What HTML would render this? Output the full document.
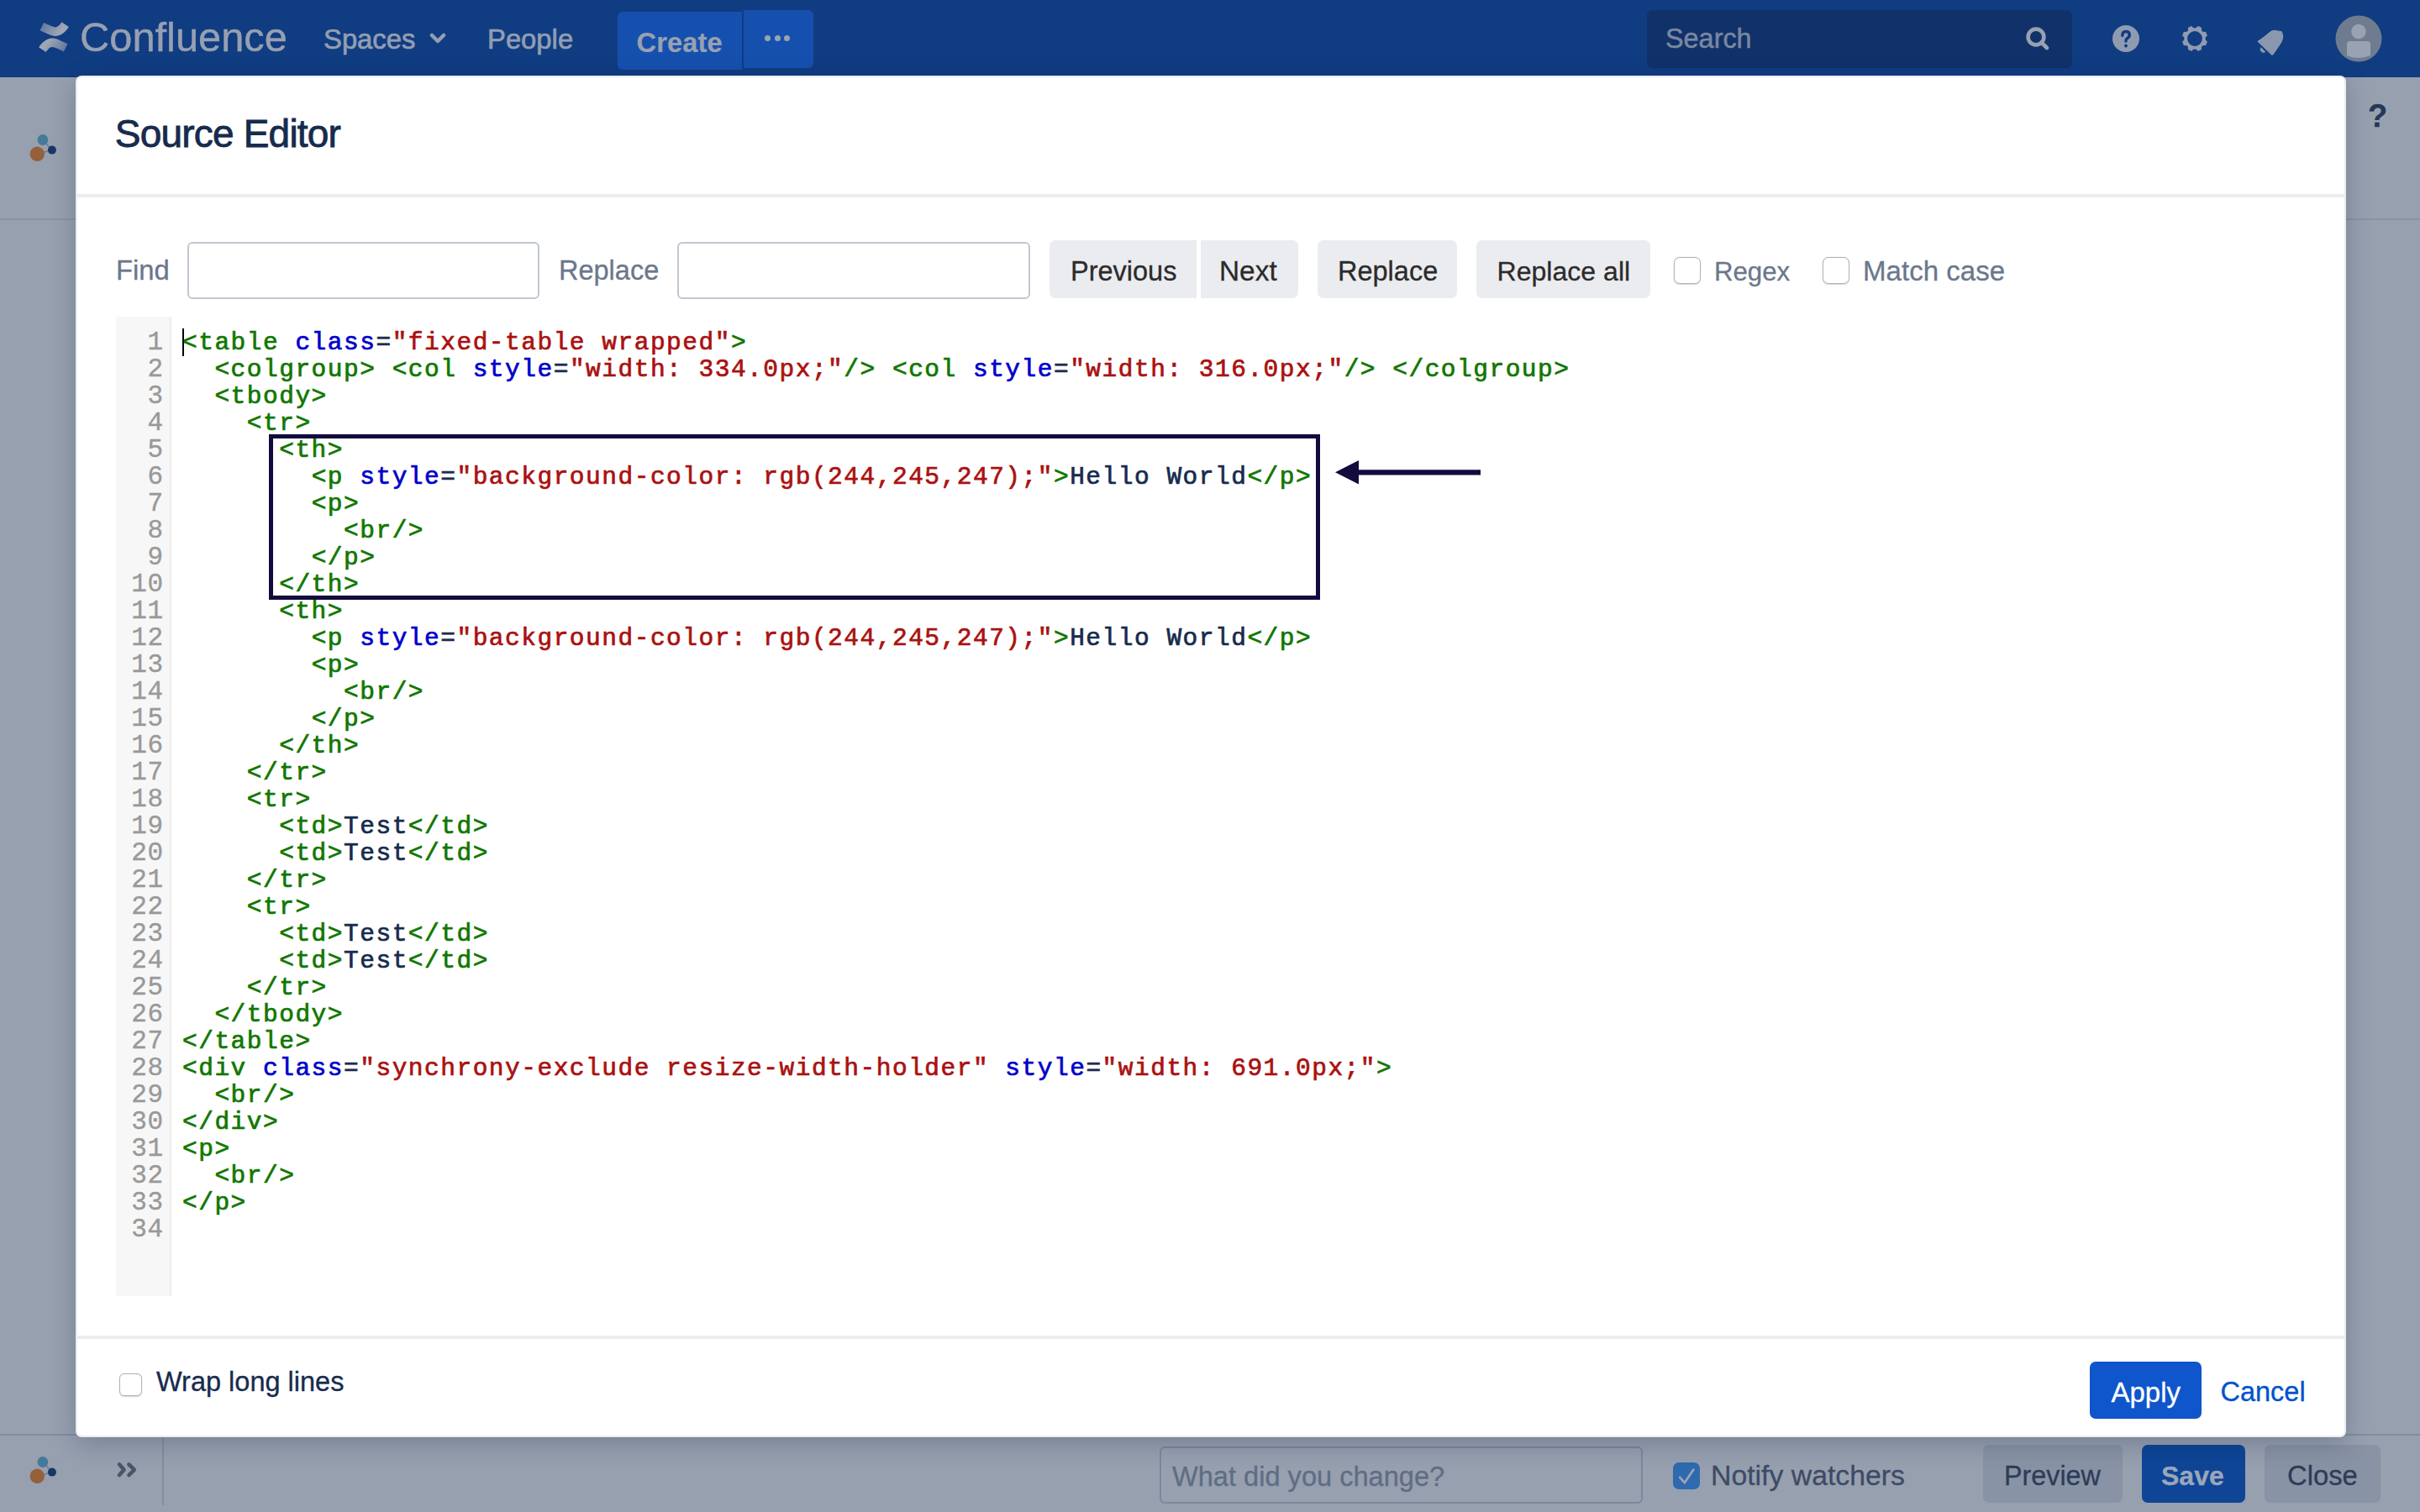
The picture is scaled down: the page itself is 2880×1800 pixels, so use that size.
<!DOCTYPE html>
<html><head><meta charset="utf-8"><title>Source Editor</title>
<style>
html,body{margin:0;padding:0;}
body{width:2880px;height:1800px;position:relative;overflow:hidden;background:#97a0af;font-family:"Liberation Sans", sans-serif;}
.b{position:absolute;}
.t{position:absolute;white-space:nowrap;line-height:1;font-family:"Liberation Sans", sans-serif;-webkit-text-stroke:0.3px;}
pre.code{position:absolute;margin:0;font-family:"Liberation Mono", monospace;font-size:32px;line-height:32px;}
@media (max-width:2000px){html{zoom:0.5;}}
</style></head><body>
<div class="b" style="left:0px;top:0px;width:2880px;height:92px;background:#103c82;"></div>
<svg class="b" style="left:40px;top:20px" width="50" height="48" viewBox="0 0 50 48">
<defs><linearGradient id="lg1" gradientUnits="userSpaceOnUse" x1="9" y1="9" x2="28" y2="22"><stop offset="0" stop-color="#5f759c"/><stop offset="1" stop-color="#9ea6b5"/></linearGradient>
<linearGradient id="lg2" gradientUnits="userSpaceOnUse" x1="39" y1="39" x2="20" y2="26"><stop offset="0" stop-color="#5f759c"/><stop offset="1" stop-color="#9ea6b5"/></linearGradient></defs>
<path d="M7.6 16.2 L20 21.8 Q26 24.2 32 21.5 Q38 18.5 41.9 12.1 L33.3 6.3 Q30 11.8 26.3 12.4 Q24 12.8 12.1 7 Z" fill="url(#lg1)"/>
<path d="M40.4 32.2 L28 26.6 Q22 24.2 16 26.9 Q10 29.9 6.1 36.3 L14.7 42.1 Q18 36.6 21.7 36 Q24 35.6 35.9 41.4 Z" fill="url(#lg2)"/>
</svg>
<div class="t" style="left:95px;top:19.7px;font-size:48.8px;color:#97a0b1;font-weight:400;-webkit-text-stroke:0.4px;">Confluence</div>
<div class="t" style="left:385px;top:30.7px;font-size:32.8px;color:#929eb2;font-weight:400;-webkit-text-stroke:0.7px;">Spaces</div>
<svg class="b" style="left:511px;top:39px" width="20" height="14" viewBox="0 0 20 14"><path d="M3 3 L10 10 L17 3" stroke="#929eb2" stroke-width="4.5" fill="none" stroke-linecap="round" stroke-linejoin="round"/></svg>
<div class="t" style="left:580px;top:30.7px;font-size:32.8px;color:#929eb2;font-weight:400;-webkit-text-stroke:0.7px;">People</div>
<div class="b" style="left:735px;top:14px;width:148px;height:69px;background:#1650ae;border-radius:6px 0 0 6px;"></div>
<div class="b" style="left:885px;top:12px;width:83px;height:69px;background:#1650ae;border-radius:0 6px 6px 0;"></div>
<div class="t" style="left:757.5px;top:34.9px;font-size:32.6px;color:#98a1b1;font-weight:700;-webkit-text-stroke:0.2px;letter-spacing:0.15px;">Create</div>
<div class="b" style="left:910.2px;top:42.4px;width:7px;height:7px;border-radius:50%;background:#9aa3b2"></div>
<div class="b" style="left:921.5px;top:42.4px;width:7px;height:7px;border-radius:50%;background:#9aa3b2"></div>
<div class="b" style="left:932.8px;top:42.4px;width:7px;height:7px;border-radius:50%;background:#9aa3b2"></div>
<div class="b" style="left:1960px;top:12px;width:506px;height:69px;background:#11316a;border-radius:7px;"></div>
<div class="t" style="left:1982px;top:30.2px;font-size:32.4px;color:#7a88a0;font-weight:400;-webkit-text-stroke:0.5px;">Search</div>
<svg class="b" style="left:2405px;top:26px" width="40" height="40" viewBox="0 0 40 40"><circle cx="18" cy="18" r="9.4" stroke="#98a1b1" stroke-width="4.6" fill="none"/><path d="M24.5 24.5 L31 31" stroke="#98a1b1" stroke-width="4.6" stroke-linecap="round"/></svg>
<svg class="b" style="left:2513px;top:29px" width="34" height="34" viewBox="0 0 34 34"><circle cx="17" cy="17" r="16" fill="#8f9bb0"/>
<path d="M12.8 13.2 Q12.8 8.4 17 8.4 Q21.2 8.4 21.2 12.6 Q21.2 15.5 18.3 16.8 Q17 17.5 17 20" stroke="#103c82" stroke-width="3.5" fill="none" stroke-linecap="round"/><circle cx="17" cy="25.6" r="2" fill="#103c82"/></svg>
<svg class="b" style="left:2595px;top:29px" width="34" height="34" viewBox="0 0 34 34"><defs><mask id="gm"><rect x="0" y="0" width="34" height="34" fill="white"/><circle cx="17" cy="17" r="8.9" fill="black"/><circle cx="17.00" cy="1.10" r="3.3" fill="black"/><circle cx="28.24" cy="5.76" r="3.3" fill="black"/><circle cx="32.90" cy="17.00" r="3.3" fill="black"/><circle cx="28.24" cy="28.24" r="3.3" fill="black"/><circle cx="17.00" cy="32.90" r="3.3" fill="black"/><circle cx="5.76" cy="28.24" r="3.3" fill="black"/><circle cx="1.10" cy="17.00" r="3.3" fill="black"/><circle cx="5.76" cy="5.76" r="3.3" fill="black"/></mask></defs>
<circle cx="17" cy="17" r="15.2" fill="#8f9bb0" mask="url(#gm)"/></svg>
<svg class="b" style="left:2675px;top:25px" width="55" height="50" viewBox="0 0 55 50">
<path d="M12.1 23.5 Q18 20 25.8 13.2 Q29 10.5 33.1 10.9 L37.5 11.8 Q40.5 11 41.3 14 Q43 18 41.8 21.5 Q41 25 38.5 28.2 L30.5 40 Q29.4 41.5 28 40.3 L12.6 25.5 Q11 24.3 12.1 23.5 Z" fill="#8b97ad"/>
<path d="M15.7 31.2 A4 4 0 0 0 21.3 36.8 Z" fill="#8b97ad"/></svg>
<svg class="b" style="left:2779px;top:18px" width="56" height="56" viewBox="0 0 56 56"><circle cx="28" cy="28" r="27.5" fill="#6f7c90"/>
<circle cx="28" cy="19.5" r="8.7" fill="#98a2b2"/><path d="M14 35 Q14 31 18 31 L38 31 Q42 31 42 35 L42 48 Q28 54 14 48 Z" fill="#98a2b2"/></svg>
<div class="b" style="left:0px;top:92px;width:2880px;height:1708px;background:#97a0af;"></div>
<div class="b" style="left:0px;top:260px;width:2880px;height:2px;background:#8a93a2;"></div>
<svg class="b" style="left:30px;top:150px" width="45" height="45" viewBox="0 0 45 45">
<path d="M20.9 16.5 L31.9 28.6 L14.3 33.3" stroke="#6b7686" stroke-width="1.3" fill="none"/>
<g style="filter:blur(0.5px)"><circle cx="20.9" cy="16.5" r="6.4" fill="#457999"/><circle cx="31.9" cy="28.6" r="5" fill="#173864"/><circle cx="14.3" cy="33.3" r="8.7" fill="#95603a"/></g></svg>
<div class="t" style="left:2818px;top:119.3px;font-size:38px;color:#253858;font-weight:700;">?</div>
<div class="b" style="left:0px;top:1707px;width:2880px;height:2px;background:#838c9b;"></div>
<div class="b" style="left:193px;top:1709px;width:2px;height:83px;background:#858e9d;"></div>
<svg class="b" style="left:30px;top:1724px" width="45" height="45" viewBox="0 0 45 45">
<path d="M20.9 16.5 L31.9 28.6 L14.3 33.3" stroke="#6b7686" stroke-width="1.3" fill="none"/>
<g style="filter:blur(0.5px)"><circle cx="20.9" cy="16.5" r="6.4" fill="#457999"/><circle cx="31.9" cy="28.6" r="5" fill="#173864"/><circle cx="14.3" cy="33.3" r="8.7" fill="#95603a"/></g></svg>
<svg class="b" style="left:136px;top:1737px" width="30" height="26" viewBox="0 0 30 26"><path d="M6 6.3 L11.6 12.7 L6 19.1 M17.4 6.3 L23.9 12.7 L17.4 19.1" stroke="#4b5567" stroke-width="4.5" fill="none" stroke-linecap="round" stroke-linejoin="round"/></svg>
<div class="b" style="left:1380px;top:1722px;width:575px;height:68px;border:2px solid #7c889b;border-radius:6px;box-sizing:border-box;"></div>
<div class="t" style="left:1395px;top:1741.7px;font-size:32.6px;color:#5f6d85;font-weight:400;">What did you change?</div>
<div class="b" style="left:1991px;top:1741px;width:32px;height:32px;background:#306aae;border-radius:7px;"></div>
<svg class="b" style="left:1991px;top:1741px" width="32" height="32" viewBox="0 0 32 32"><path d="M8.2 17.8 L13.8 24.2 L24.4 8.6" stroke="#9ba6b8" stroke-width="2.7" fill="none" stroke-linecap="round" stroke-linejoin="round"/></svg>
<div class="t" style="left:2036px;top:1739.8px;font-size:33.8px;color:#3d4b66;font-weight:400;">Notify watchers</div>
<div class="b" style="left:2360px;top:1720px;width:166px;height:69px;background:#8893a5;border-radius:7px;"></div>
<div class="t" style="left:2385px;top:1741.1px;font-size:32.3px;color:#2e3c57;font-weight:400;">Preview</div>
<div class="b" style="left:2549px;top:1720px;width:123px;height:69px;background:#0e4596;border-radius:7px;"></div>
<div class="t" style="left:2572px;top:1741.3px;font-size:32px;color:#9aa6ba;font-weight:700;">Save</div>
<div class="b" style="left:2695px;top:1720px;width:138px;height:69px;background:#8893a5;border-radius:7px;"></div>
<div class="t" style="left:2722px;top:1740.6px;font-size:32.8px;color:#2e3c57;font-weight:400;">Close</div>
<div class="b" style="left:90px;top:90px;width:2702px;height:1621px;background:#fff;border:2px solid #ebecf0;box-sizing:border-box;border-radius:7px;box-shadow:0 8px 30px rgba(9,30,66,0.24);"></div>
<div class="t" style="left:136.8px;top:136.3px;font-size:46px;color:#172b4d;font-weight:400;letter-spacing:-0.8px;-webkit-text-stroke:0.85px;">Source Editor</div>
<div class="b" style="left:90px;top:231px;width:2702px;height:4px;background:#ebecf0;"></div>
<div class="t" style="left:138px;top:306.0px;font-size:32.8px;color:#6b778c;font-weight:400;">Find</div>
<div class="b" style="left:223px;top:288px;width:419px;height:68px;border:2px solid #c1c7d0;border-radius:6px;box-sizing:border-box;"></div>
<div class="t" style="left:665px;top:306.3px;font-size:32.5px;color:#6b778c;font-weight:400;">Replace</div>
<div class="b" style="left:806px;top:288px;width:420px;height:68px;border:2px solid #c1c7d0;border-radius:6px;box-sizing:border-box;"></div>
<div class="b" style="left:1249px;top:286px;width:175px;height:69px;background:#ebecf0;border-radius:7px 0 0 7px;"></div>
<div class="b" style="left:1429px;top:286px;width:116px;height:69px;background:#ebecf0;border-radius:0 7px 7px 0;"></div>
<div class="b" style="left:1568px;top:286px;width:166px;height:69px;background:#ebecf0;border-radius:7px;"></div>
<div class="b" style="left:1757px;top:286px;width:207px;height:69px;background:#ebecf0;border-radius:7px;"></div>
<div class="t" style="left:1274px;top:306.7px;font-size:32.5px;color:#2b2b2b;font-weight:400;">Previous</div>
<div class="t" style="left:1451px;top:305.9px;font-size:33.4px;color:#2b2b2b;font-weight:400;">Next</div>
<div class="t" style="left:1592px;top:306.9px;font-size:32.5px;color:#2b2b2b;font-weight:400;">Replace</div>
<div class="t" style="left:1781.5px;top:307.2px;font-size:32.1px;color:#2b2b2b;font-weight:400;">Replace all</div>
<div class="b" style="left:1992px;top:306px;width:32px;height:32px;border:1.6px solid #b3b3b3;border-radius:7px;box-sizing:border-box;background:#fff;box-shadow:0 0.5px 1.5px rgba(0,0,0,0.18);"></div>
<div class="t" style="left:2040px;top:307.7px;font-size:31.2px;color:#6b778c;font-weight:400;">Regex</div>
<div class="b" style="left:2169px;top:306px;width:32px;height:32px;border:1.6px solid #b3b3b3;border-radius:7px;box-sizing:border-box;background:#fff;box-shadow:0 0.5px 1.5px rgba(0,0,0,0.18);"></div>
<div class="t" style="left:2217px;top:306.1px;font-size:33.1px;color:#6b778c;font-weight:400;">Match case</div>
<div class="b" style="left:138px;top:377px;width:66px;height:1166px;background:#f7f7f7;border-right:2px solid #ececec;box-sizing:border-box;"></div>
<pre class="code" style="left:138px;top:391.75px;width:56.6px;text-align:right;color:#999;font-size:31px;letter-spacing:0.6px;-webkit-text-stroke:0.35px;">1
2
3
4
5
6
7
8
9
10
11
12
13
14
15
16
17
18
19
20
21
22
23
24
25
26
27
28
29
30
31
32
33
34</pre>
<pre class="code" style="left:217px;top:392.3px;font-size:29.5px;letter-spacing:1.5px;-webkit-text-stroke:0.7px;"><span style="color:#117700">&lt;table</span> <span style="color:#0000cc">class</span><span style="color:#1d2d4f">=</span><span style="color:#aa1111">"fixed-table wrapped"</span><span style="color:#117700">&gt;</span>
  <span style="color:#117700">&lt;colgroup&gt;</span> <span style="color:#117700">&lt;col</span> <span style="color:#0000cc">style</span><span style="color:#1d2d4f">=</span><span style="color:#aa1111">"width: 334.0px;"</span><span style="color:#117700">/&gt;</span> <span style="color:#117700">&lt;col</span> <span style="color:#0000cc">style</span><span style="color:#1d2d4f">=</span><span style="color:#aa1111">"width: 316.0px;"</span><span style="color:#117700">/&gt;</span> <span style="color:#117700">&lt;/colgroup&gt;</span>
  <span style="color:#117700">&lt;tbody&gt;</span>
    <span style="color:#117700">&lt;tr&gt;</span>
      <span style="color:#117700">&lt;th&gt;</span>
        <span style="color:#117700">&lt;p</span> <span style="color:#0000cc">style</span><span style="color:#1d2d4f">=</span><span style="color:#aa1111">"background-color: rgb(244,245,247);"</span><span style="color:#117700">&gt;</span><span style="color:#172b4d">Hello World</span><span style="color:#117700">&lt;/p&gt;</span>
        <span style="color:#117700">&lt;p&gt;</span>
          <span style="color:#117700">&lt;br/&gt;</span>
        <span style="color:#117700">&lt;/p&gt;</span>
      <span style="color:#117700">&lt;/th&gt;</span>
      <span style="color:#117700">&lt;th&gt;</span>
        <span style="color:#117700">&lt;p</span> <span style="color:#0000cc">style</span><span style="color:#1d2d4f">=</span><span style="color:#aa1111">"background-color: rgb(244,245,247);"</span><span style="color:#117700">&gt;</span><span style="color:#172b4d">Hello World</span><span style="color:#117700">&lt;/p&gt;</span>
        <span style="color:#117700">&lt;p&gt;</span>
          <span style="color:#117700">&lt;br/&gt;</span>
        <span style="color:#117700">&lt;/p&gt;</span>
      <span style="color:#117700">&lt;/th&gt;</span>
    <span style="color:#117700">&lt;/tr&gt;</span>
    <span style="color:#117700">&lt;tr&gt;</span>
      <span style="color:#117700">&lt;td&gt;</span><span style="color:#172b4d">Test</span><span style="color:#117700">&lt;/td&gt;</span>
      <span style="color:#117700">&lt;td&gt;</span><span style="color:#172b4d">Test</span><span style="color:#117700">&lt;/td&gt;</span>
    <span style="color:#117700">&lt;/tr&gt;</span>
    <span style="color:#117700">&lt;tr&gt;</span>
      <span style="color:#117700">&lt;td&gt;</span><span style="color:#172b4d">Test</span><span style="color:#117700">&lt;/td&gt;</span>
      <span style="color:#117700">&lt;td&gt;</span><span style="color:#172b4d">Test</span><span style="color:#117700">&lt;/td&gt;</span>
    <span style="color:#117700">&lt;/tr&gt;</span>
  <span style="color:#117700">&lt;/tbody&gt;</span>
<span style="color:#117700">&lt;/table&gt;</span>
<span style="color:#117700">&lt;div</span> <span style="color:#0000cc">class</span><span style="color:#1d2d4f">=</span><span style="color:#aa1111">"synchrony-exclude resize-width-holder"</span> <span style="color:#0000cc">style</span><span style="color:#1d2d4f">=</span><span style="color:#aa1111">"width: 691.0px;"</span><span style="color:#117700">&gt;</span>
  <span style="color:#117700">&lt;br/&gt;</span>
<span style="color:#117700">&lt;/div&gt;</span>
<span style="color:#117700">&lt;p&gt;</span>
  <span style="color:#117700">&lt;br/&gt;</span>
<span style="color:#117700">&lt;/p&gt;</span>
</pre>
<div class="b" style="left:217px;top:391px;width:2px;height:33px;background:#000;"></div>
<div class="b" style="left:320px;top:517px;width:1251px;height:197px;border:5.5px solid #130b3e;box-sizing:border-box;"></div>
<svg class="b" style="left:1580px;top:540px" width="190" height="45" viewBox="0 0 190 45"><path d="M9 22.3 L37 8 L37 36.5 Z" fill="#130b3e"/><path d="M35 22.3 L182 22.3" stroke="#130b3e" stroke-width="6.2"/></svg>
<div class="b" style="left:90px;top:1590px;width:2702px;height:4px;background:#ebecf0;"></div>
<div class="b" style="left:142px;top:1635px;width:27px;height:27px;border:1.6px solid #b3b3b3;border-radius:6px;box-sizing:border-box;background:#fff;box-shadow:0 0.5px 1.5px rgba(0,0,0,0.18);"></div>
<div class="t" style="left:186px;top:1629.2px;font-size:32.5px;color:#172b4d;font-weight:400;">Wrap long lines</div>
<div class="b" style="left:2487px;top:1621px;width:133px;height:68px;background:#0f55cc;border-radius:7px;"></div>
<div class="t" style="left:2512.5px;top:1640.5px;font-size:33px;color:#ffffff;font-weight:400;">Apply</div>
<div class="t" style="left:2642.5px;top:1640.9px;font-size:32.5px;color:#0052cc;font-weight:400;">Cancel</div>
</body></html>
